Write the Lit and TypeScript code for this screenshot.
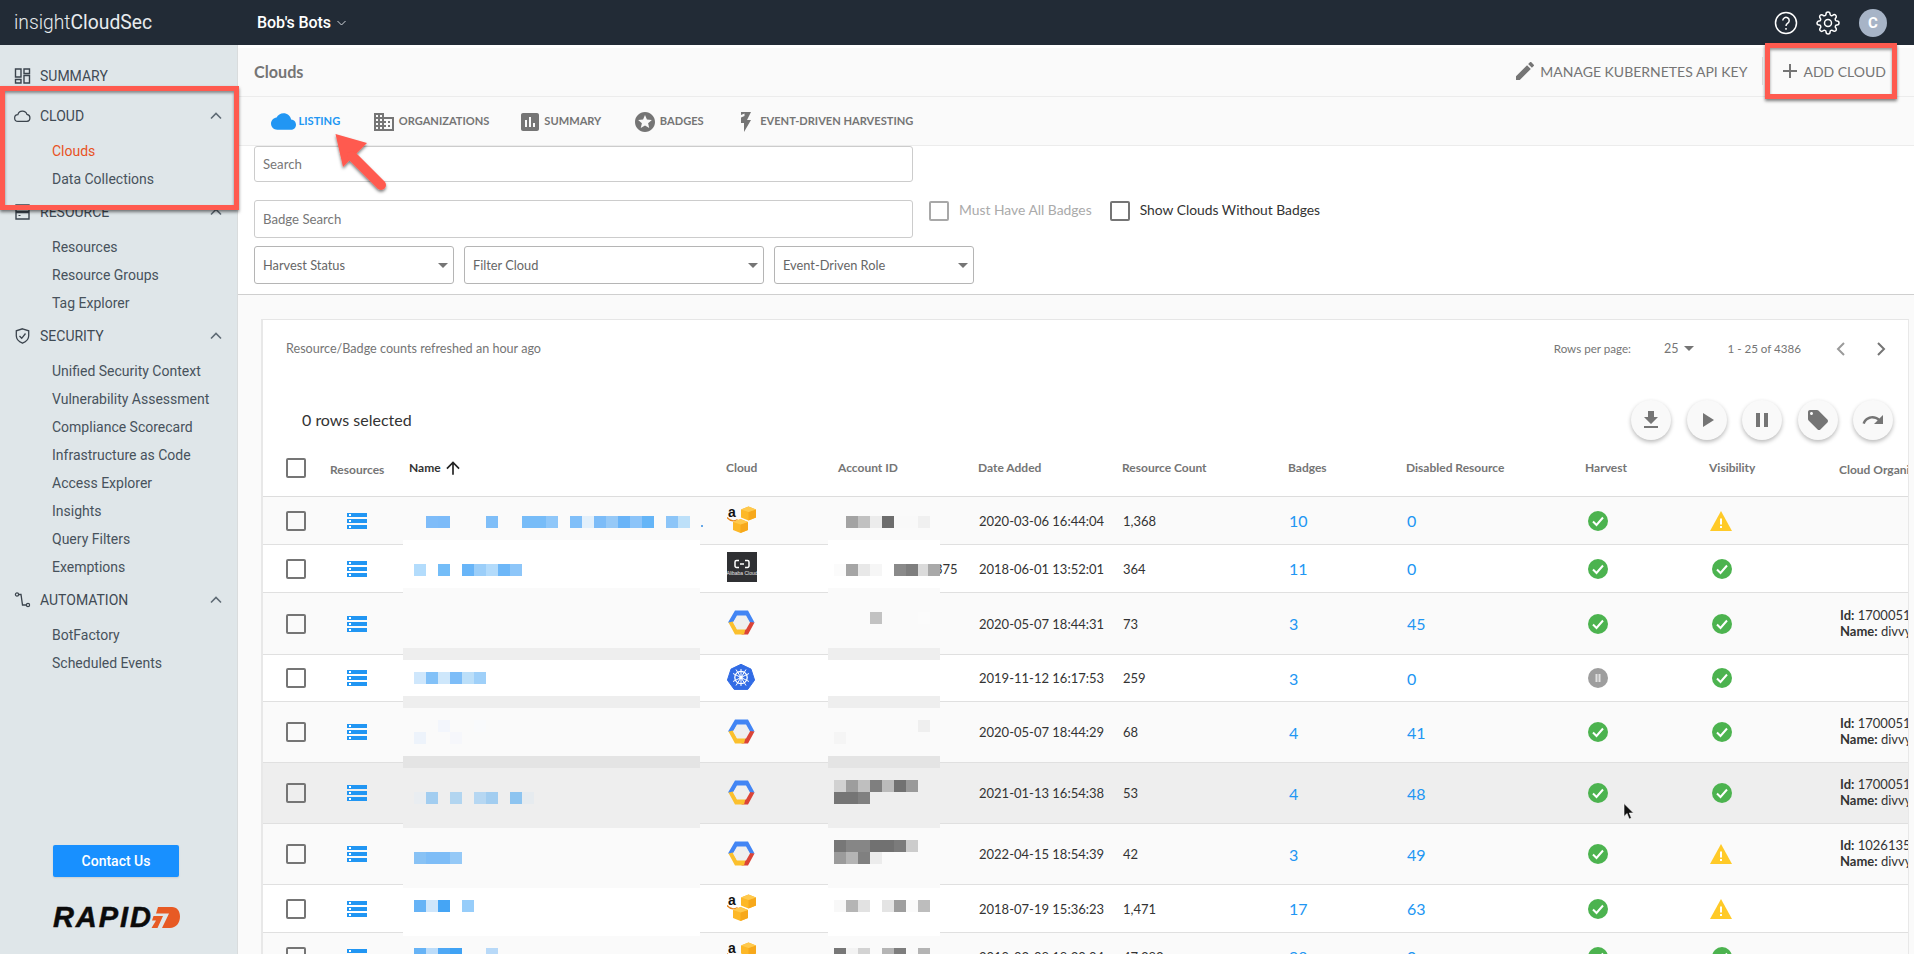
import { LitElement, html, css } from "lit";
import { customElement } from "lit/decorators.js";

const CARD_X = 261;
const CARD_Y = 319;

const BANDS: [number, number, string][] = [
  [540, 588, "#ffffff"], [588, 648, "#fafafa"], [648, 660, "#eeeeee"], [660, 696, "#ffffff"],
  [696, 708, "#eeeeee"], [708, 756, "#fafafa"], [756, 768, "#e4e4e4"], [768, 828, "#eeeeee"],
  [828, 888, "#fafafa"], [888, 936, "#ffffff"], [936, 960, "#fafafa"],
];

const NAME_BLOCKS: [number, number, string][] = [
  [426, 516, "#7ebcf9"], [438, 516, "#7cbbf9"], [486, 516, "#7fbef8"], [522, 516, "#77bcf8"], [534, 516, "#77bcf8"],
  [546, 516, "#8fc7f9"], [570, 516, "#80bff9"], [582, 516, "#e3f0fb"], [594, 516, "#7cbcf8"], [606, 516, "#96c9f7"],
  [618, 516, "#69b4f8"], [630, 516, "#8cc4f9"], [642, 516, "#65b5f7"], [666, 516, "#8cc5f8"], [678, 516, "#bde0f9"],
  [414, 564, "#b3dcfc"], [438, 564, "#74bdf8"], [462, 564, "#68b5f8"], [474, 564, "#9bcef9"], [486, 564, "#b3dbfb"],
  [498, 564, "#6db7f8"], [510, 564, "#8dc6f9"],
  [414, 672, "#cfe7fc"], [426, 672, "#82c1f8"], [438, 672, "#cee7fb"], [450, 672, "#7dbdf8"], [462, 672, "#bcdff9"], [474, 672, "#9fd0f9"],
  [438, 720, "#f3f6fc"], [474, 720, "#f9fafc"], [414, 732, "#edf3fb"], [450, 732, "#f6f7fb"],
  [414, 792, "#e9edf1"], [426, 792, "#a2cdf0"], [450, 792, "#b2d5f0"], [474, 792, "#b6d7f2"], [486, 792, "#a2cdf0"], [510, 792, "#8dc4f0"], [522, 792, "#e6ebef"],
  [414, 852, "#88c2f5"], [426, 852, "#7ebdf7"], [438, 852, "#7ebdf7"], [450, 852, "#95c9f7"],
  [414, 900, "#66b3f6"], [426, 900, "#cfe6fb"], [438, 900, "#45a5f5"], [462, 900, "#97cdfa"],
  [414, 948, "#66b3f6"], [426, 948, "#bcdcf9"], [438, 948, "#4ea8f5"], [450, 948, "#3fa2f4"], [486, 948, "#b8d9f8"],
];

const ACCT_BLOCKS: [number, number, string][] = [
  [846, 516, "#a3a3a3"], [858, 516, "#c1c1c1"], [870, 516, "#ececec"], [882, 516, "#6d6d6d"], [894, 516, "#f9f9f9"], [906, 516, "#f9f9f9"], [918, 516, "#f0f0f0"],
  [834, 564, "#fbfbfb"], [846, 564, "#a5a5a5"], [858, 564, "#e8e8e8"], [870, 564, "#f6f6f6"], [894, 564, "#8a8a8a"], [906, 564, "#7e7e7e"], [918, 564, "#dbdbdb"], [928, 564, "#a9a9a9"],
  [870, 612, "#c2c2c2"], [918, 612, "#fbfbfb"],
  [918, 720, "#efefef"], [834, 732, "#f5f5f5"],
  [834, 780, "#d1d1d1"], [846, 780, "#9d9d9d"], [858, 780, "#bfbfbf"], [870, 780, "#7f7f7f"], [882, 780, "#bbbbbb"], [894, 780, "#717171"], [906, 780, "#999999"],
  [834, 792, "#757575"], [846, 792, "#757575"], [858, 792, "#808080"],
  [834, 840, "#777777"], [846, 840, "#868686"], [858, 840, "#868686"], [870, 840, "#717171"], [882, 840, "#717171"], [894, 840, "#7b7b7b"], [906, 840, "#cccccc"],
  [834, 852, "#9b9b9b"], [846, 852, "#b4b4b4"], [858, 852, "#808080"], [870, 852, "#ececec"],
  [834, 900, "#f8f8f8"], [846, 900, "#b5b5b5"], [858, 900, "#e2e2e2"], [882, 900, "#e4e4e4"], [894, 900, "#9e9e9e"], [906, 900, "#fafafa"], [918, 900, "#bdbdbd"],
  [834, 948, "#777777"], [846, 948, "#f3f3f3"], [858, 948, "#d3d3d3"], [882, 948, "#b5b5b5"], [894, 948, "#7e7e7e"], [918, 948, "#b4b4b4"],
];

type Row = {
  h: number; cloud: string; date: string; count: string; badges: string; disabled: string;
  harvest: string; vis: string; id?: string; acct?: string; hover?: boolean; alt: boolean;
};

const ROWS: Row[] = [
  { h: 48, cloud: "aws", date: "2020-03-06 16:44:04", count: "1,368", badges: "10", disabled: "0", harvest: "ok", vis: "warn", alt: true },
  { h: 48, cloud: "ali", date: "2018-06-01 13:52:01", count: "364", badges: "11", disabled: "0", harvest: "ok", vis: "ok", acct: "375", alt: false },
  { h: 62, cloud: "gcp", date: "2020-05-07 18:44:31", count: "73", badges: "3", disabled: "45", harvest: "ok", vis: "ok", id: "170005123", alt: true },
  { h: 47, cloud: "k8s", date: "2019-11-12 16:17:53", count: "259", badges: "3", disabled: "0", harvest: "pause", vis: "ok", alt: false },
  { h: 61, cloud: "gcp", date: "2020-05-07 18:44:29", count: "68", badges: "4", disabled: "41", harvest: "ok", vis: "ok", id: "170005123", alt: true },
  { h: 61, cloud: "gcp", date: "2021-01-13 16:54:38", count: "53", badges: "4", disabled: "48", harvest: "ok", vis: "ok", id: "170005123", hover: true, alt: true },
  { h: 61, cloud: "gcp", date: "2022-04-15 18:54:39", count: "42", badges: "3", disabled: "49", harvest: "ok", vis: "warn", id: "102613523", alt: true },
  { h: 48, cloud: "aws", date: "2018-07-19 15:36:23", count: "1,471", badges: "17", disabled: "63", harvest: "ok", vis: "warn", alt: false },
  { h: 48, cloud: "aws", date: "2019-03-08 18:30:04", count: "47,383", badges: "98", disabled: "0", harvest: "ok", vis: "ok", alt: true },
];

const awsIcon = html`<svg class="c-aws" viewBox="0 0 29 27">
  <text x="1" y="11" class="aws-a">a</text>
  <path d="M0 11.500c3 3.500 7 4 10.500 2" fill="none" stroke="#e8871e" stroke-width="1.200"/>
  <path d="M21.500 .5l7.500 3v8l-7.500 3-7.500-3v-8z" fill="#fdb827"/><path d="M21.500 6v8.500l7.500-3v-8z" fill="#f7a81b"/><path d="M21.500 6L29 3.500 21.500 .5 14 3.500z" fill="#ffc94d"/>
  <path d="M13.500 13l7.500 3v8l-7.500 3-7.500-3v-8z" fill="#fdb827"/><path d="M13.500 18.500V27l7.500-3v-8z" fill="#f7a81b"/><path d="M13.500 18.500L21 16l-7.500-3L6 16z" fill="#ffc94d"/>
</svg>`;
const aliIcon = html`<svg class="c-ali" viewBox="0 0 30 30">
  <rect width="30" height="30" fill="#2f3033"/>
  <path d="M12 8.500H9.500A1.500 1.500 0 0 0 8 10v4a1.500 1.500 0 0 0 1.500 1.500H12M18 8.500h2.500A1.500 1.500 0 0 1 22 10v4a1.500 1.500 0 0 1-1.500 1.500H18M13 12h4" fill="none" stroke="#fff" stroke-width="1.500"/>
  <text x="15" y="22.500" class="ali-t">Alibaba Cloud</text>
</svg>`;
const gcpIcon = html`<svg class="c-gcp" viewBox="0 0 27 25">
  <path d="M7 .5h13l6.500 12-4.500 1-4-7H9l-4.500 7-4.500-1z" fill="#4285f4"/>
  <path d="M26.500 12.500L20 24.500h-6.500l1-6 3.500-.5 3.500-6z" fill="#db4437"/>
  <path d="M.5 12.500L7 24.500h9l1.500-5.500H9l-4-7.500z" fill="#fbc02d"/>
  <path d="M9 5.500h9l4 7-4 7H9l-4-7z" fill="#efefef"/>
</svg>`;
const k8sIcon = html`<svg class="c-k8s" viewBox="0 0 28 27">
  <path d="M14 .3l10 4.800 3.600 11-6.800 9.300H7.200L.4 16.100 4 5.100z" fill="#326ce5" stroke="#326ce5" stroke-linejoin="round"/>
  <g fill="none" stroke="#fff" stroke-width="1.300">
    <circle cx="14" cy="13.500" r="6.200"/>
    <path d="M14 5v17M6 9.500l16 8M22 9.500l-16 8M9 21.500l10-16M19 21.500L9 5.500" stroke-width="1"/>
  </g>
  <circle cx="14" cy="13.500" r="1.700" fill="#fff"/>
</svg>`;
const okIcon = html`<svg class="st" viewBox="0 0 20 20"><circle cx="10" cy="10" r="10" fill="#4cb34f"/><path d="M5 10.500l3.500 3.500L15 6.500" fill="none" stroke="#fff" stroke-width="2"/></svg>`;
const pauseIcon = html`<svg class="st" viewBox="0 0 20 20"><circle cx="10" cy="10" r="10" fill="#9e9e9e"/><path d="M7.500 6h2v8h-2zM10.500 6h2v8h-2z" fill="#e0e0e0"/></svg>`;
const warnIcon = html`<svg class="st warn" viewBox="0 0 22 20"><path d="M11 0l11 20H0z" fill="#ffca28"/><path d="M10 7.500h2v6h-2zM10 15h2v2h-2z" fill="#fff"/></svg>`;
const listIcon = html`<svg class="list-i" viewBox="0 0 20 16"><path d="M0 0h20v4H0zM0 6h20v4H0zM0 12h20v4H0z" fill="#2196f3"/><path d="M2 1h2v2H2zM2 7h2v2H2zM2 13h2v2H2z" fill="#fff"/></svg>`;

const chevUp = html`<svg class="chev" viewBox="0 0 12 8"><path d="M1 6.500l5-5 5 5" fill="none" stroke="#5f6b75" stroke-width="1.600"/></svg>`;

const NAV = [
  { label: "SUMMARY", icon: html`<svg class="nav-i" viewBox="0 0 16 16"><path d="M1 1h5.500v8H1zM9.500 1H15v4.500H9.500zM1 11.500h5.500V15H1zM9.500 7.500H15V15H9.500z" fill="none" stroke="#3b444d" stroke-width="1.400"/></svg>`, items: [] as string[], chev: false },
  { label: "CLOUD", icon: html`<svg class="nav-i" viewBox="0 0 18 14"><path d="M4.500 12.800a3.600 3.600 0 0 1-.4-7.200 5 5 0 0 1 9.600-.3 3.800 3.800 0 0 1 0 7.500z" fill="none" stroke="#3b444d" stroke-width="1.300"/></svg>`, items: ["Clouds", "Data Collections"], chev: true },
  { label: "RESOURCE", icon: html`<svg class="nav-i" viewBox="0 0 16 16"><path d="M1.500 1h13v6.500h-13zM1.500 8.500h13V15h-13z" fill="none" stroke="#3b444d" stroke-width="1.400"/><path d="M4 4h2v1H4zM4 11h2v1H4z" fill="#3b444d"/></svg>`, items: ["Resources", "Resource Groups", "Tag Explorer"], chev: true },
  { label: "SECURITY", icon: html`<svg class="nav-i" viewBox="0 0 16 16"><path d="M8 .8l6.200 2v5c0 3.500-2.600 6-6.200 7.400C4.400 13.800 1.800 11.300 1.800 7.800v-5z" fill="none" stroke="#3b444d" stroke-width="1.300"/><path d="M5 8l2.200 2.300L11 5.500" fill="none" stroke="#3b444d" stroke-width="1.300"/></svg>`, items: ["Unified Security Context", "Vulnerability Assessment", "Compliance Scorecard", "Infrastructure as Code", "Access Explorer", "Insights", "Query Filters", "Exemptions"], chev: true },
  { label: "AUTOMATION", icon: html`<svg class="nav-i" viewBox="0 0 16 16"><path d="M3 2.500h3.500L8 13h5" fill="none" stroke="#3b444d" stroke-width="1.300"/><circle cx="2.500" cy="2.500" r="1.600" fill="#dfe6e9" stroke="#3b444d" stroke-width="1.200"/><circle cx="13.500" cy="13" r="1.600" fill="#dfe6e9" stroke="#3b444d" stroke-width="1.200"/></svg>`, items: ["BotFactory", "Scheduled Events"], chev: true },
];

const TABS = [
  { label: "LISTING", on: true, icon: html`<svg class="tab-i cloud" viewBox="0 0 24 24"><path fill="#2196f3" d="M19.350 10.040C18.670 6.590 15.640 4 12 4 9.110 4 6.600 5.640 5.350 8.040 2.340 8.360 0 10.910 0 14c0 3.310 2.690 6 6 6h13c2.760 0 5-2.240 5-5 0-2.640-2.050-4.780-4.650-4.960z"/></svg>` },
  { label: "ORGANIZATIONS", on: false, icon: html`<svg class="tab-i" viewBox="0 0 24 24"><path fill="#757575" d="M12 7V3H2v18h20V7H12zM6 19H4v-2h2v2zm0-4H4v-2h2v2zm0-4H4V9h2v2zm0-4H4V5h2v2zm4 12H8v-2h2v2zm0-4H8v-2h2v2zm0-4H8V9h2v2zm0-4H8V5h2v2zm10 12h-8v-2h2v-2h-2v-2h2v-2h-2V9h8v10zm-2-8h-2v2h2v-2zm0 4h-2v2h2v-2z"/></svg>` },
  { label: "SUMMARY", on: false, icon: html`<svg class="tab-i" viewBox="0 0 24 24"><path fill="#757575" d="M19 3H5c-1.100 0-2 .9-2 2v14c0 1.100.9 2 2 2h14c1.100 0 2-.9 2-2V5c0-1.100-.9-2-2-2zM9 17H7v-7h2v7zm4 0h-2V7h2v10zm4 0h-2v-4h2v4z"/></svg>` },
  { label: "BADGES", on: false, icon: html`<svg class="tab-i" viewBox="0 0 24 24"><path fill="#757575" d="M11.990 2C6.470 2 2 6.480 2 12s4.470 10 9.990 10C17.520 22 22 17.520 22 12S17.520 2 11.990 2zm4.240 16L12 15.450 7.770 18l1.120-4.810-3.730-3.230 4.920-.42L12 5l1.920 4.530 4.920.42-3.730 3.230L16.230 18z"/></svg>` },
  { label: "EVENT-DRIVEN HARVESTING", on: false, icon: html`<svg class="tab-i" viewBox="0 0 24 24"><path fill="#757575" d="M7 2v3l3.500-1.500V6L7 7.500V13h3v9l7-12h-4l4-8z"/></svg>` },
];

@customElement("app-root")
export class AppRoot extends LitElement {
  static styles = css`
    :host { display: block; position: relative; width: 100%; height: 100vh; overflow: hidden; font-family: Lato, "Liberation Sans", sans-serif; background: #fafafa; color: #333; }
    .top { height: 45px; background: #222b36; display: flex; align-items: center; color: #fff; font-family: Roboto, sans-serif; }
    .brand { margin-left: 14px; width: 243px; font-size: 19.300px; font-weight: 300; color: #e8ebee; }
    .brand b { font-weight: 400; }
    .org { font-size: 16px; font-weight: 500; letter-spacing: -.1px; }
    .org-chev { width: 9px; height: 6px; margin-left: 6px; }
    .top-r { margin-left: auto; display: flex; align-items: center; margin-right: 27px; }
    .help { width: 24px; height: 24px; margin-right: 18px; }
    .gear { width: 24px; height: 24px; margin-right: 19px; }
    .avatar { width: 28px; height: 28px; border-radius: 50%; background: #a7b4c7; display: flex; align-items: center; justify-content: center; font-size: 15px; font-weight: 700; color: #fff; }
    .body { display: flex; height: 909px; }

    .side { width: 238px; flex: none; box-sizing: border-box; background: #dfe6e9; border-right: 1px solid #d9dcdd; padding-top: 15.500px; display: flex; flex-direction: column; font-family: Roboto, sans-serif; color: #47525c; font-size: 14px; }
    .group { margin-bottom: 4px; }
    .group.first { margin-bottom: 10px; }
    .ghead { height: 30px; display: flex; align-items: center; color: #3f4a54; padding-left: 14px; }
    .nav-i { width: 17px; height: 16px; margin-right: 9px; flex: none; }
    .chev { width: 12px; height: 8px; margin-left: auto; margin-right: 15px; }
    .glist { padding-top: 6px; }
    .gitem { height: 28px; line-height: 28px; padding-left: 52px; }
    .gitem.active { color: #e8521e; }
    .side-foot { margin-top: auto; padding: 0 0 26px 53px; }
    .contact { width: 126px; height: 32px; background: #1890ff; color: #fff; border-radius: 2px; display: flex; align-items: center; justify-content: center; font-weight: 500; font-size: 14px; box-shadow: 0 1px 2px rgba(0,0,0,.1); }
    .r7 { margin-top: 30px; display: flex; align-items: center; height: 21px; width: 126px; }
    .r7 span { font: italic 700 29px/21px "Liberation Sans", sans-serif; color: #0b0b0b; letter-spacing: 1.900px; -webkit-text-stroke: .5px #0b0b0b; }
    .r7 svg { width: 30px; height: 21px; margin-left: -3px; flex: none; }

    .main { flex: 1; min-width: 0; display: flex; flex-direction: column; background: #fafafa; padding-top: 3px; box-sizing: border-box; position: relative; }
    .main::before { content: ""; position: absolute; left: 0; right: 0; top: 0; height: 3px; background: #fff; }
    .head { height: 49px; box-sizing: border-box; border-bottom: 1px solid #ececec; display: flex; align-items: center; padding: 0 0 2px 16px; color: #757575; }
    .title { font-size: 16.200px; font-weight: 700; }
    .acts { margin-left: auto; display: flex; align-items: center; font-size: 14px; margin-right: 28px; }
    .pencil { width: 24px; height: 24px; margin-right: 3px; }
    .act { display: flex; align-items: center; }
    .sep { width: 1px; height: 28px; background: #e0e0e0; margin: 0 15px 0 15px; }
    .plus { width: 24px; height: 24px; margin-right: 1px; }
    .tabs { height: 49px; box-sizing: border-box; display: flex; align-items: center; padding: 1px 0 0 33px; gap: 32px; border-bottom: 1px solid #ececec; }
    .tab { display: flex; align-items: center; gap: 2.500px; font-size: 11.100px; font-weight: 700; color: #757575; }
    .tab span { margin-top: -3px; }
    .tab:nth-child(3) { margin-left: -3.500px; }
    .tab:nth-child(5) { margin-left: -2px; }
    .tab.on { color: #2196f3; }
    .tab-i { width: 24px; height: 24px; flex: none; }
    .tab-i.cloud { width: 25px; height: 25px; }
    .filters { background: #fff; height: 149px; box-sizing: border-box; border-bottom: 1px solid #cfcfcf; padding: 0 0 0 16px; }
    .inp { box-sizing: border-box; width: 659px; border: 1px solid #ccc; border-radius: 3px; display: flex; align-items: center; padding-left: 8px; color: #777; font-size: 13.200px; background: #fff; }
    .search { height: 36px; margin-bottom: 18px; }
    .badge-row { display: flex; margin-bottom: 8px; }
    .badge { height: 38px; }
    .cb-label { display: flex; align-items: center; height: 20px; margin: 1px 0 0 16px; font-size: 13.850px; color: #333; gap: 10px; }
    .cb-label + .cb-label { margin-left: 18px; }
    .cb-label.dis { color: #aaa; }
    .cb-label span { margin-top: -4px; }
    .box { width: 20px; height: 20px; box-sizing: border-box; border: 2px solid #757575; border-radius: 2px; flex: none; background: transparent; }
    .box.dis { border-color: #a8a8a8; }
    .selects { display: flex; gap: 10px; }
    .sel { box-sizing: border-box; width: 200px; height: 38px; border: 1px solid #b5b5b5; border-radius: 3px; display: flex; align-items: center; padding: 0 5px 0 8px; color: #666; font-size: 12.800px; }
    .sel.wide { width: 300px; }
    .sel i { margin-left: auto; width: 0; height: 0; border-left: 5px solid transparent; border-right: 5px solid transparent; border-top: 5px solid #757575; margin-right: 0; }

    .card { position: relative; flex: 1; min-height: 0; margin: 24px 5px 0 23px; background: #fff; border-left: 2px solid #e8e8e8; border-top: 1px solid #e6e6e6; border-right: 1px solid #e8e8e8; overflow: hidden; }
    .bar { height: 57px; display: flex; align-items: center; padding-left: 23px; color: #757575; font-size: 12.600px; }
    .pager { margin-left: auto; display: flex; align-items: center; font-size: 11.600px; margin-right: 16px; }
    .pager .n { margin-left: 33px; font-size: 12.500px; }
    .pager .tri { margin-left: 6px; width: 0; height: 0; border-left: 5px solid transparent; border-right: 5px solid transparent; border-top: 5px solid #757575; }
    .pager .range { margin-left: 33px; }
    .pg { width: 10px; height: 16px; }
    .pg.prev { margin-left: 35px; }
    .pg.next { margin-left: 30px; margin-right: 6px; }
    .actions { height: 67px; box-sizing: border-box; padding: 23px 0 0 39px; display: flex; font-size: 16px; color: #333; }
    .sel-n { line-height: 40px; }
    .rounds { margin-left: auto; display: flex; gap: 15.500px; margin-right: 15px; }
    .rb { width: 40px; height: 40px; border-radius: 50%; background: #f9f9f9; box-shadow: 0 2px 4px rgba(0,0,0,.28); display: flex; align-items: center; justify-content: center; }
    .rb svg { width: 24px; height: 24px; fill: #757575; }
    .grid { display: grid; grid-template-columns: 67px 79px 317px 112px 140px 144px 166px 118px 179px 124px 130px 1fr; align-items: center; }
    .thead { height: 53px; box-sizing: border-box; padding-bottom: 5px; border-bottom: 1px solid #ddd; font-size: 12px; font-weight: 700; color: #757575; }
    .thead .sorted { color: #333; display: flex; align-items: center; }
    .thead .sorted svg { width: 20px; height: 20px; margin-left: 2px; }
    .thead .low { padding-top: 4px; white-space: nowrap; }
    .cellbox { padding-left: 23px; display: flex; }
    .row { box-sizing: border-box; border-bottom: 1px solid #e0e0e0; background: #fff; font-size: 13px; color: #333; }
    .row.alt { background: #fafafa; }
    .row.hover { background: #eeeeee; }
    .list-i { width: 20px; height: 16px; margin-left: 17px; display: block; }
    .acct { padding-left: 97px; }
    .date { padding-left: 1px; }
    .count { padding-left: 1px; }
    .num { font-size: 16px; color: #2196f3; padding-left: 1px; }
    .c-aws { width: 29px; height: 27px; display: block; margin: -3px 0 0 1px; }
    .c-ali { width: 30px; height: 30px; display: block; margin: -3px 0 0 1px; }
    .c-gcp { width: 27px; height: 25px; display: block; margin: -2px 0 0 2px; }
    .c-k8s { width: 28px; height: 27px; display: block; margin: -2px 0 0 1px; }
    .aws-a { font: 700 14px "Liberation Sans", sans-serif; fill: #111; }
    .ali-t { font: 5px "Liberation Sans", sans-serif; fill: #e8e8e8; text-anchor: middle; }
    .st { width: 20px; height: 20px; display: block; margin-left: 3px; }
    .st.warn { width: 22px; margin-left: 1px; }
    .org-c { white-space: nowrap; overflow: hidden; line-height: 16px; padding-left: 1px; margin-top: -2px; }
    .org-c b { font-weight: 700; }
    .mosaic { position: absolute; inset: 0; pointer-events: none; }
    .band { position: absolute; }
    .blk { position: absolute; width: 12px; height: 12px; }
    .dot { position: absolute; width: 2px; height: 2px; background: #66a8e8; }
    .cursor { position: absolute; left: 1623px; top: 803px; width: 11px; height: 17px; }
    .mark { position: absolute; box-sizing: border-box; border: 5px solid #ff5a4f; box-shadow: 0 2px 3px rgba(0,0,0,.5), inset 0 2px 3px rgba(0,0,0,.4); pointer-events: none; }
    .mark.a { left: 0; top: 86px; width: 239px; height: 124px; }
    .mark.b { left: 1765px; top: 43px; width: 132px; height: 56px; }
    .arrow { position: absolute; left: 325px; top: 125px; width: 70px; height: 75px; overflow: visible; }
  `;

  private row(r: Row) {
    const cloud = { aws: awsIcon, ali: aliIcon, gcp: gcpIcon, k8s: k8sIcon }[r.cloud];
    const st = (k: string) => (k === "ok" ? okIcon : k === "warn" ? warnIcon : pauseIcon);
    return html`<div class="grid row ${r.alt ? "alt" : ""} ${r.hover ? "hover" : ""}" style="height:${r.h}px">
      <div class="cellbox"><div class="box"></div></div>
      <div>${listIcon}</div>
      <div></div>
      <div>${cloud}</div>
      <div class="acct">${r.acct ?? ""}</div>
      <div class="date">${r.date}</div>
      <div class="count">${r.count}</div>
      <div class="num">${r.badges}</div>
      <div class="num">${r.disabled}</div>
      <div>${st(r.harvest)}</div>
      <div>${st(r.vis)}</div>
      <div class="org-c">${r.id ? html`<b>Id:</b> ${r.id}<br /><b>Name:</b> divvy-bots` : ""}</div>
    </div>`;
  }

  render() {
    return html`
      <div class="top">
        <div class="brand">insight<b>CloudSec</b></div>
        <div class="org">Bob's Bots</div>
        <svg class="org-chev" viewBox="0 0 9 6"><path d="M.5 1l4 4 4-4" fill="none" stroke="#cfd4d9" stroke-width="1"/></svg>
        <div class="top-r">
          <svg class="help" viewBox="0 0 24 24" fill="none" stroke="#fff" stroke-width="1.500"><circle cx="12" cy="12" r="10.500"/><path d="M8.800 9.500a3.200 3.200 0 1 1 5 2.700c-1.200.8-1.800 1.300-1.800 2.800"/><path d="M12 17v1.800"/></svg>
          <svg class="gear" viewBox="0 0 24 24" fill="none" stroke="#fff" stroke-width="1.500"><circle cx="12" cy="12" r="3.500"/><path d="M19.400 15a1.650 1.650 0 0 0 .33 1.820l.06.06a2 2 0 0 1 0 2.830 2 2 0 0 1-2.830 0l-.06-.06a1.650 1.650 0 0 0-1.820-.33 1.650 1.650 0 0 0-1 1.510V21a2 2 0 0 1-2 2 2 2 0 0 1-2-2v-.09A1.650 1.650 0 0 0 9 19.400a1.650 1.650 0 0 0-1.820.33l-.06.06a2 2 0 0 1-2.830 0 2 2 0 0 1 0-2.830l.06-.06a1.650 1.650 0 0 0 .33-1.820 1.650 1.650 0 0 0-1.510-1H3a2 2 0 0 1-2-2 2 2 0 0 1 2-2h.09A1.650 1.650 0 0 0 4.600 9a1.650 1.650 0 0 0-.33-1.820l-.06-.06a2 2 0 0 1 0-2.830 2 2 0 0 1 2.830 0l.06.06a1.650 1.650 0 0 0 1.820.33H9a1.650 1.650 0 0 0 1-1.510V3a2 2 0 0 1 2-2 2 2 0 0 1 2 2v.09a1.650 1.650 0 0 0 1 1.510 1.650 1.650 0 0 0 1.820-.33l.06-.06a2 2 0 0 1 2.830 0 2 2 0 0 1 0 2.830l-.06.06a1.650 1.650 0 0 0-.33 1.820V9a1.650 1.650 0 0 0 1.510 1H21a2 2 0 0 1 2 2 2 2 0 0 1-2 2h-.09a1.650 1.650 0 0 0-1.510 1z"/></svg>
          <div class="avatar">C</div>
        </div>
      </div>
      <div class="body">
        <nav class="side">
          ${NAV.map((g, i) => html`<div class="group ${i === 0 ? "first" : ""}">
            <div class="ghead">${g.icon}<span>${g.label}</span>${g.chev ? chevUp : ""}</div>
            ${g.items.length ? html`<div class="glist">${g.items.map((t) => html`<div class="gitem ${t === "Clouds" ? "active" : ""}">${t}</div>`)}</div>` : ""}
          </div>`)}
          <div class="side-foot">
            <div class="contact">Contact Us</div>
            <div class="r7"><span>RAPID</span>
              <svg viewBox="0 0 30 21"><path d="M8 0h14c5 0 8 4 8 9.500C30 16 26 21 20 21h-8l7-14.500H6z" fill="#e75a24"/><path d="M3.500 9H13l-5.500 12H1.500l4.500-7.500H2z" fill="#e75a24"/></svg>
            </div>
          </div>
        </nav>
        <main class="main">
          <div class="head">
            <div class="title">Clouds</div>
            <div class="acts">
              <div class="act"><svg class="pencil" viewBox="0 0 24 24"><path fill="#757575" d="M3 17.250V21h3.750L17.810 9.940l-3.750-3.750L3 17.250zM20.710 7.040c.39-.39.39-1.020 0-1.410l-2.340-2.340c-.39-.39-1.020-.39-1.410 0l-1.830 1.830 3.750 3.750 1.830-1.830z"/></svg>MANAGE KUBERNETES API KEY</div>
              <div class="sep"></div>
              <div class="act"><svg class="plus" viewBox="0 0 24 24"><path fill="#757575" d="M19 13h-6v6h-2v-6H5v-2h6V5h2v6h6v2z"/></svg>ADD CLOUD</div>
            </div>
          </div>
          <div class="tabs">
            ${TABS.map((t) => html`<div class="tab ${t.on ? "on" : ""}">${t.icon}<span>${t.label}</span></div>`)}
          </div>
          <div class="filters">
            <div class="inp search">Search</div>
            <div class="badge-row">
              <div class="inp badge">Badge Search</div>
              <div class="cb-label dis"><div class="box dis"></div><span>Must Have All Badges</span></div>
              <div class="cb-label"><div class="box"></div><span>Show Clouds Without Badges</span></div>
            </div>
            <div class="selects">
              <div class="sel">Harvest Status<i></i></div>
              <div class="sel wide">Filter Cloud<i></i></div>
              <div class="sel">Event-Driven Role<i></i></div>
            </div>
          </div>
          <section class="card">
            <div class="bar">
              <div>Resource/Badge counts refreshed an hour ago</div>
              <div class="pager">
                <span>Rows per page:</span>
                <span class="n">25</span><span class="tri"></span>
                <span class="range">1 - 25 of 4386</span>
                <svg class="pg prev" viewBox="0 0 10 16"><path d="M8 2L2 8l6 6" fill="none" stroke="#9a9a9a" stroke-width="2"/></svg>
                <svg class="pg next" viewBox="0 0 10 16"><path d="M2 2l6 6-6 6" fill="none" stroke="#757575" stroke-width="2"/></svg>
              </div>
            </div>
            <div class="actions">
              <div class="sel-n">0 rows selected</div>
              <div class="rounds">
                <div class="rb"><svg viewBox="0 0 24 24"><path d="M19 9h-4V3H9v6H5l7 7 7-7zM5 18v2h14v-2H5z"/></svg></div>
                <div class="rb"><svg viewBox="0 0 24 24"><path d="M8 5v14l11-7z"/></svg></div>
                <div class="rb"><svg viewBox="0 0 24 24"><path d="M6 19h4V5H6v14zm8-14v14h4V5h-4z"/></svg></div>
                <div class="rb"><svg viewBox="0 0 24 24"><path d="M21.410 11.580l-9-9C12.050 2.220 11.550 2 11 2H4c-1.100 0-2 .9-2 2v7c0 .55.22 1.050.59 1.420l9 9c.36.36.86.58 1.410.58.55 0 1.050-.22 1.410-.59l7-7c.37-.36.59-.86.59-1.410 0-.55-.23-1.060-.59-1.420zM5.500 7C4.670 7 4 6.330 4 5.500S4.670 4 5.500 4 7 4.670 7 5.500 6.330 7 5.500 7z"/></svg></div>
                <div class="rb"><svg viewBox="0 0 24 24"><path d="M18.400 10.600C16.550 8.990 14.150 8 11.500 8c-4.650 0-8.580 3.030-9.960 7.220L3.900 16c1.050-3.190 4.050-5.500 7.600-5.500 1.950 0 3.730.72 5.120 1.880L13 16h9V7l-3.600 3.600z"/></svg></div>
              </div>
            </div>
            <div class="grid thead">
              <div class="cellbox"><div class="box"></div></div>
              <div class="low">Resources</div>
              <div class="sorted">Name<svg viewBox="0 0 24 24"><path fill="#222" d="M4 12l1.410 1.410L11 7.830V20h2V7.830l5.580 5.590L20 12l-8-8-8 8z"/></svg></div>
              <div>Cloud</div>
              <div>Account ID</div>
              <div>Date Added</div>
              <div>Resource Count</div>
              <div>Badges</div>
              <div>Disabled Resource</div>
              <div>Harvest</div>
              <div>Visibility</div>
              <div class="low">Cloud Organization</div>
            </div>
            ${ROWS.map((r) => this.row(r))}
            <div class="mosaic">
              ${BANDS.map(([a, b, c]) => html`
                <div class="band" style="left:${403 - CARD_X - 2}px;width:297px;top:${a - CARD_Y - 1}px;height:${b - a}px;background:${c}"></div>
                <div class="band" style="left:${828 - CARD_X - 2}px;width:112px;top:${a - CARD_Y - 1}px;height:${b - a}px;background:${c}"></div>`)}
              ${[...NAME_BLOCKS, ...ACCT_BLOCKS].map(([x, y, c]) => html`<div class="blk" style="left:${x - CARD_X - 2}px;top:${y - CARD_Y - 1}px;background:${c}"></div>`)}
              <div class="dot" style="left:${701 - CARD_X - 2}px;top:${525 - CARD_Y - 1}px"></div>
            </div>
          </section>
        </main>
      </div>
      <svg class="cursor" viewBox="0 0 11 17"><path d="M1 .5v13l3-3 2.200 5.500 2.200-1L6.300 10H10.500z" fill="#111" stroke="#fff" stroke-width=".6"/></svg>
      <div class="mark a"></div>
      <div class="mark b"></div>
      <svg class="arrow" viewBox="0 0 70 75">
        <defs><filter id="sh" x="-30%" y="-30%" width="160%" height="160%"><feDropShadow dx="0" dy="2" stdDeviation="1.500" flood-color="#000" flood-opacity=".5"/></filter></defs>
        <g filter="url(#sh)">
          <path d="M10.500 9L42 18 18 42z" fill="#ff5a4f"/>
          <path d="M27 31l29 29" stroke="#ff5a4f" stroke-width="10" stroke-linecap="round"/>
        </g>
      </svg>
    `;
  }
}
